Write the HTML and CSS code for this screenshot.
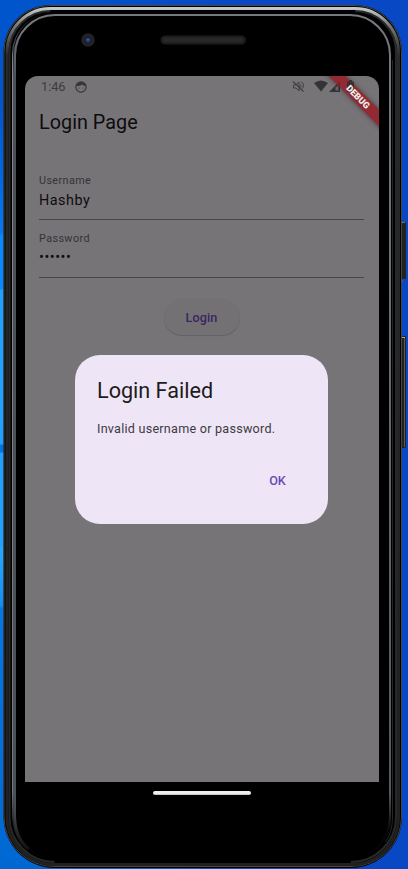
FILE: index.html
```html
<!DOCTYPE html>
<html lang="en">
<head>
<meta charset="utf-8">
<meta name="viewport" content="width=device-width">
<title>Login Page</title>
<link rel="stylesheet" href="styles.css">
</head>
<body>
<main class="desktop">
  <svg class="device" viewBox="0 0 408 869" aria-hidden="true">
    <defs>
      <linearGradient id="rim" x1="0" y1="0" x2="0" y2="1">
        <stop offset="0" stop-color="#c4c7c8"/><stop offset=".02" stop-color="#77797b"/><stop offset=".055" stop-color="#282929"/><stop offset="1" stop-color="#202020"/>
      </linearGradient>
      <linearGradient id="inner" x1="0" y1="0" x2="0" y2="1">
        <stop offset="0" stop-color="#77777e"/><stop offset=".92" stop-color="#55585d"/><stop offset=".965" stop-color="#08090a"/><stop offset="1" stop-color="#000"/>
      </linearGradient>
      <linearGradient id="edge" gradientUnits="userSpaceOnUse" x1="0" y1="12" x2="0" y2="850">
        <stop offset="0" stop-color="#85878a" stop-opacity="0"/><stop offset=".06" stop-color="#85878a"/><stop offset=".93" stop-color="#777a7e"/><stop offset="1" stop-color="#333" stop-opacity="0"/>
      </linearGradient>
      <linearGradient id="side" gradientUnits="userSpaceOnUse" x1="0" y1="30" x2="0" y2="850">
        <stop offset="0" stop-color="#4b4f56" stop-opacity="0"/><stop offset=".06" stop-color="#4b4f56"/><stop offset=".93" stop-color="#4b4f56"/><stop offset="1" stop-color="#4b4f56" stop-opacity=".2"/>
      </linearGradient>
    </defs>
    <rect x="401" y="222" width="5" height="57" rx="1" fill="#202122"/><path d="M402 222.500h3M402 281h1" stroke="#77706a"/>
    <rect x="401" y="336" width="5" height="112" rx="1" fill="#202122"/><path d="M404.500 338v109" stroke="#555758"/><path d="M402 337.500h3" stroke="#aaa"/>
    <path d="M3.500 52A47 47 0 0 1 50.500 5H355a47 47 0 0 1 47 47V817a51 51 0 0 1-51 51H54.500a51 51 0 0 1-51-51z" fill="#000"/>
    <path d="M4 52A46.500 46.500 0 0 1 50.500 5.500H355A46.500 46.500 0 0 1 401.500 52V817A50 49.500 0 0 1 351 866.500H54.500A50 49.500 0 0 1 4 817z" fill="none" stroke="#484542"/>
    <path d="M9.500 817V52A41 41 0 0 1 50.500 11M355 11A41 41 0 0 1 396 52V817A45 45 0 0 1 351 862M54.500 862A45 45 0 0 1 9.500 817" fill="none" stroke="#272828" stroke-width="2"/>
    <path d="M7 52A43.500 43.500 0 0 1 50.500 8.500H355A43.500 43.500 0 0 1 398.500 52V817A47 47 0 0 1 351 864.500H54.500A47.500 47.500 0 0 1 7 817z" fill="none" stroke="url(#rim)" stroke-width="3"/>
    <path d="M15 55A40 40 0 0 1 55 15H350A40 40 0 0 1 390 55V817A43 43 0 0 1 347 860H58A43 43 0 0 1 15 817z" fill="none" stroke="url(#inner)" stroke-width="2"/>
    <path d="M14.500 817V55A40 40 0 0 1 20 35M14.500 817q1 22 14 32" fill="none" stroke="url(#side)" stroke-width="3"/>
    <path d="M12.500 817V54A41.500 41.500 0 0 1 54 12.500M12.500 817q1 16 9 28" fill="none" stroke="url(#edge)"/>
    <path d="M392.500 60v757q0 15-7 25" fill="none" stroke="#242528"/>
    <circle cx="88" cy="40" r="6.700" fill="#242426"/><circle cx="88" cy="40" r="4.200" fill="#17202f"/><circle cx="88" cy="40" r="2.600" fill="#233562"/><circle cx="88" cy="39.800" r="1" fill="#50659a"/>
    <rect x="160.500" y="35.500" width="85.500" height="9" rx="4.500" fill="#1b1c1b"/><rect x="163" y="37.500" width="80" height="5" rx="2" fill="#272827"/>
  </svg>
  <section class="screen">
    <header class="status">
      <span class="clock">1:46</span>
      <svg class="face" viewBox="0 0 14 14"><circle cx="7" cy="7" r="5.100" fill="none" stroke="#373639" stroke-width="1.200"/><path d="M2 6q.5-4 5-4t5 4Q9.500 6 8 4.500 6 6.500 2 6z" fill="#373639"/><circle cx="5" cy="8" r=".6" fill="#373639"/><circle cx="9" cy="8" r=".6" fill="#373639"/></svg>
      <svg class="indicators" viewBox="292 79 64 15">
        <path d="M293 81.500l10.500 10" stroke="#403e42" stroke-width="1.200"/>
        <path d="M293.500 85h2l3.500-3v9l-3-3h-2.500z" fill="none" stroke="#403e42"/><path d="M300.500 84.500q1.500 1.500 0 3M301 81.500q4 2.500 1.500 7" fill="none" stroke="#403e42"/>
        <path d="M314 83q7-5 14 0l-7 8.500z" fill="#343336"/>
        <path d="M340 81v11h-11z" fill="#343336"/><path d="M335.500 87.500l3-3v6h-3z" fill="#69666a"/>
      </svg>
    </header>
    <h1 class="page-title">Login Page</h1>
    <form class="form">
      <div class="field"><span class="label">Username</span><span class="value">Hashby</span></div>
      <div class="field second"><span class="label">Password</span><span class="value dots">••••••</span></div>
      <button class="login" type="button">Login</button>
    </form>
    <div class="dialog" role="dialog">
      <h2>Login Failed</h2>
      <p>Invalid username or password.</p>
      <button class="ok" type="button">OK</button>
    </div>
    <div class="ribbon"></div>
    <svg class="battery" viewBox="0 0 7 12"><path d="M0 1.500h2V0h3v1.500h2V12H0z" fill="#29282b" fill-opacity=".75"/></svg>
    <div class="ribbon debug">DEBUG</div>
  </section>
  <div class="home-bar"></div>
</main>
</body>
</html>
```
FILE: styles.css
```css
* { box-sizing: border-box; }
body { margin: 0; font-family: Roboto, sans-serif; }
.desktop {
  position: relative; width: 408px; height: 869px; overflow: hidden; padding: 76px 29px 0 25px;
  background:
    linear-gradient(#0054cc 0 100px, #0068e2 180px, #0878ef 234px, #078aff 235px 289px, #20a0ff 290px 444px, #0070ea 445px 452px, #22a0ff 453px 547px, #27a9ff 548px, #168df5 606px, #0875e4 608px, #0068d3 869px) 0 0 / 20px 100% no-repeat,
    linear-gradient(90deg, #0056cc, #0848c4 60%, #0848c4);
}
.desktop::after {
  content: ""; position: absolute; z-index: 0; left: 20px; bottom: 0; width: 180px; height: 60px;
  background: linear-gradient(90deg, #0068d3, #0058cc);
}
.device { position: absolute; z-index: 1; inset: 0; width: 408px; height: 869px; }
.screen {
  position: relative; z-index: 2; overflow: hidden; width: 354px; height: 706px;
  border-radius: 13px 13px 0 0; background: #777478; color: #0d0c0e;
}
.status { display: flex; height: 22px; padding-left: 16px; }
.clock { width: 33px; font-size: 12.7px; line-height: 22px; color: #3c3a3e; }
.face { width: 14px; height: 14px; margin-top: 4px; }
.indicators { width: 64px; height: 15px; margin: 3px 0 0 204px; }
.page-title { margin: 12px 0 0 14px; font-size: 19.8px; line-height: 26px; font-weight: 400; letter-spacing: .03px; }
.form { display: flex; flex-direction: column; padding: 38px 15px 0 14px; }
.field { display: flex; flex-direction: column; height: 46px; border-bottom: 1px solid #47454a; }
.second { margin-top: 12px; }
.label { font-size: 10.8px; line-height: 14px; letter-spacing: .4px; color: #353338; }
.value { font-size: 14.4px; line-height: 20px; margin-top: 3px; letter-spacing: .5px; }
.dots { letter-spacing: .55px; margin-top: 2px; }
.login {
  align-self: center; margin: 21px 0 0; width: 76px; height: 36px; border: 0; border-radius: 18px;
  background: #747175; box-shadow: 0 1px 1px rgba(0,0,0,.18);
  font: 500 12.6px/36px Roboto, sans-serif; letter-spacing: .1px; color: #3a2661;
}
.dialog {
  position: absolute; left: 50px; top: 279px; width: 253px; height: 169px; padding: 21px 22px;
  display: flex; flex-direction: column; border-radius: 25px; background: #eee6f6;
}
.dialog h2 { margin: 0; font-size: 21.6px; line-height: 29px; font-weight: 400; color: #1d1b20; }
.dialog p { margin: 15px 0 0; font-size: 12.6px; line-height: 18px; letter-spacing: .24px; color: #3e3a43; white-space: nowrap; }
.ok {
  align-self: flex-end; margin: 25px 7px 0 0; width: 43px; height: 36px; padding: 0; border: 0; background: none;
  font: 500 12.6px/36px Roboto, sans-serif; color: #6c48b5;
}
.ribbon {
  position: absolute; top: 16px; right: -27px; width: 94px; height: 12px; transform: rotate(45deg);
  background: rgba(151,24,32,.8); box-shadow: 0 0 5px rgba(0,0,0,.45);
}
.battery { position: absolute; left: 322px; top: 4px; width: 7px; height: 12px; }
.debug {
  background: none; box-shadow: none; padding-right: 3px;
  color: #eee; text-align: center; font-size: 9px; line-height: 12px; font-weight: 900;
}
.home-bar { position: relative; z-index: 2; width: 98px; height: 4px; margin: 9px auto 0 128px; border-radius: 2px; background: linear-gradient(#eee 70%, #aaa); }
```
